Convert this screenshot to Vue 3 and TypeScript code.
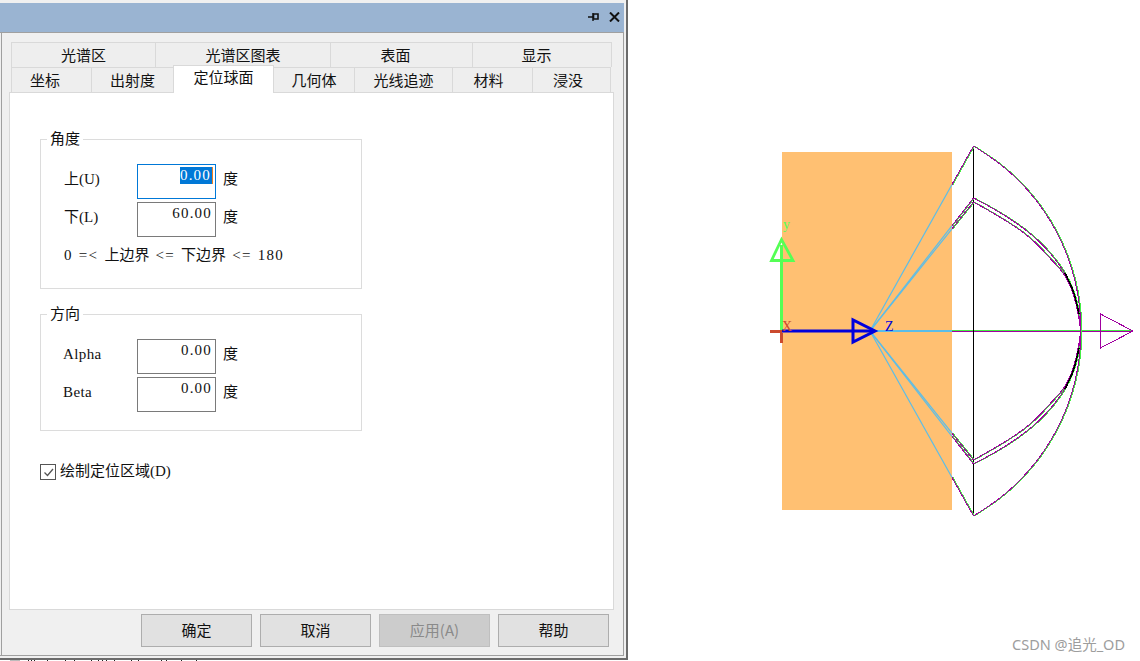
<script setup lang="ts">
type Pt = [number, number];

// shift pulls a label left of the tab's centre, the tabs are not evenly centred in the original
const topTabs = [
  { label: "光谱区", w: 144, shift: 0 },
  { label: "光谱区图表", w: 175, shift: 0 },
  { label: "表面", w: 142, shift: 12 },
  { label: "显示", w: 140, shift: 11 },
];
const bottomTabs = [
  { label: "坐标", w: 80, shift: 13 },
  { label: "出射度", w: 82, shift: 0 },
  { label: "定位球面", w: 101, shift: 0, active: true },
  { label: "几何体", w: 81, shift: 0 },
  { label: "光线追迹", w: 98, shift: 0 },
  { label: "材料", w: 80, shift: 8 },
  { label: "浸没", w: 79, shift: 7 },
];
const buttons = [
  { label: "确定" },
  { label: "取消" },
  { label: "应用(A)", disabled: true },
  { label: "帮助" },
];

const AXIS_Y = 331;
const VERTEX_X = 973.5;

const mirror = (pts: Pt[]): Pt[] => pts.map(([x, y]) => [x, AXIS_Y * 2 - y] as Pt);

// smooth line through points, quadratic through the midpoints
const toPath = (pts: Pt[]) => {
  let d = `M${pts[0][0]} ${pts[0][1]}`;
  for (let i = 1; i < pts.length - 1; i++) {
    const mx = (pts[i][0] + pts[i + 1][0]) / 2;
    const my = (pts[i][1] + pts[i + 1][1]) / 2;
    d += ` Q${pts[i][0]} ${pts[i][1]} ${mx} ${my}`;
  }
  const last = pts[pts.length - 1];
  return d + ` L${last[0]} ${last[1]}`;
};

const outer: Pt[] = [];
for (let y = 146; y <= 331; y += 12) {
  outer.push([868 + Math.sqrt(213 * 213 - (331 - y) * (331 - y)), y]);
}
outer.push([1081, 331]);

const innerA: Pt[] = [[973.5, 198], [1000, 211.7], [1033.3, 235], [1056.7, 260], [1070, 281.7], [1078.3, 306.7], [1080.7, 331]];
const innerB: Pt[] = [[973.5, 202], [1000, 216.7], [1030, 236.7], [1053.3, 261.7], [1066.7, 276.7], [1076.7, 303.3], [1080.7, 331]];
const blackBit: Pt[] = [[1065, 273], [1072, 287], [1076, 300], [1079, 314]];

const curves = [outer, innerA, innerB].flatMap((c) => [toPath(c), toPath(mirror(c))]);
const blackBits = [toPath(blackBit), toPath(mirror(blackBit))];

// rays are blue over the orange block, then green and magenta up to the vertex
const RAY_X = 870;
const RECT_RIGHT = 952;
const rays = [146, 198, 202, 516, 464, 460].map((endY) => {
  const t = (RECT_RIGHT - RAY_X) / (VERTEX_X - RAY_X);
  const midY = AXIS_Y + (endY - AXIS_Y) * t;
  return { midY, endY };
});

const cutoffTicks = [10, 13, 16, 29, 47, 56, 73, 80, 84, 88, 96, 113, 120, 143, 148, 163, 178, 186];
</script>

<template>
  <div class="page">
    <div class="frame">
      <div class="dialog">
        <div class="titlebar">
          <svg class="pin" width="11" height="10" viewBox="0 0 11 10">
            <path d="M0 5H5M5 1V9" stroke="#111" stroke-width="1.4" fill="none" />
            <path d="M5.500 2H10V7H5.500Z" fill="none" stroke="#111" stroke-width="1.6" />
          </svg>
          <svg class="close" width="11" height="10" viewBox="0 0 11 10">
            <path d="M1 0.500L10 9.500M10 0.500L1 9.500" stroke="#111" stroke-width="2" fill="none" />
          </svg>
        </div>
        <div class="body">
          <div class="tabs">
            <div class="tab-row">
              <div
                v-for="t in topTabs"
                :key="t.label"
                class="tab"
                :style="{ width: t.w + 'px', paddingRight: t.shift + 'px' }"
              >{{ t.label }}</div>
            </div>
            <div class="tab-row lower">
              <div
                v-for="t in bottomTabs"
                :key="t.label"
                class="tab"
                :class="{ active: t.active }"
                :style="{ width: t.w + 'px', paddingRight: t.shift + 'px' }"
              >{{ t.label }}</div>
            </div>
          </div>
          <div class="sheet">
            <section class="group angle">
              <span class="legend">角度</span>
              <div class="row">
                <span class="label">上<i>(U)</i></span>
                <div class="field focused"><span class="selected">0.00</span></div>
                <span class="unit">度</span>
              </div>
              <div class="row">
                <span class="label">下<i>(L)</i></span>
                <div class="field">60.00</div>
                <span class="unit">度</span>
              </div>
              <div class="hint"><i>0 =&lt; </i>上边界<i> &lt;= </i>下边界<i> &lt;= 180</i></div>
            </section>
            <section class="group direction">
              <span class="legend">方向</span>
              <div class="row">
                <span class="label"><i>Alpha</i></span>
                <div class="field">0.00</div>
                <span class="unit">度</span>
              </div>
              <div class="row">
                <span class="label"><i>Beta</i></span>
                <div class="field">0.00</div>
                <span class="unit">度</span>
              </div>
            </section>
            <label class="check">
              <span class="box">
                <svg width="13" height="13" viewBox="0 0 13 13">
                  <path d="M2.500 6.500L5.500 9.500L11 3" fill="none" stroke="#555" stroke-width="1.300" />
                </svg>
              </span>
              <span class="check-text">绘制定位区域<i>(D)</i></span>
            </label>
          </div>
          <div class="footer">
            <button v-for="b in buttons" :key="b.label" type="button" class="btn" :disabled="b.disabled">{{ b.label }}</button>
          </div>
        </div>
      </div>
    </div>

    <svg class="canvas" width="512" height="661" viewBox="628 0 512 661">
      <rect x="782" y="152" width="170" height="358" fill="#ffc072" />

      <g fill="none" stroke="#5bbde8">
        <line x1="876" :y1="AXIS_Y" x2="952" :y2="AXIS_Y" stroke-width="2" />
        <line v-for="r in rays" :key="r.endY" :x1="RAY_X" :y1="AXIS_Y" x2="952" :y2="r.midY" stroke-width="1.200" />
      </g>

      <g shape-rendering="crispEdges" fill="none">
        <line x1="952" y1="330" x2="1133" y2="330" stroke="#44ee44" />
        <line x1="952" y1="331.500" x2="1133" y2="331.500" stroke="#a000a0" />
        <line :x1="VERTEX_X" y1="146" :x2="VERTEX_X" y2="516" stroke="#000" />
        <template v-for="r in rays" :key="r.endY">
          <line x1="953" :y1="r.midY" :x2="VERTEX_X + 1" :y2="r.endY" stroke="#44ee44" />
          <line x1="952" :y1="r.midY" :x2="VERTEX_X" :y2="r.endY" stroke="#a000a0" />
        </template>
        <path v-for="(d, i) in curves" :key="'g' + i" :d="d" stroke="#44ee44" transform="translate(1 0)" />
        <path v-for="(d, i) in curves" :key="'m' + i" :d="d" stroke="#a000a0" />
        <path v-for="(d, i) in blackBits" :key="'b' + i" :d="d" stroke="#000" stroke-width="1.500" />
        <path d="M1100.500 314L1133 331L1100.500 348Z" stroke="#a000a0" />
      </g>

      <g fill="none">
        <line x1="781.500" y1="331" x2="781.500" y2="245" stroke="#55ff55" stroke-width="3" />
        <path d="M781.500 239.500L771.500 260.500H793L781.500 239.500Z" stroke="#55ff55" stroke-width="2.800" />
        <line x1="770" y1="331.500" x2="782" y2="331.500" stroke="#cb4a2e" stroke-width="3" />
        <line x1="781.500" y1="333" x2="781.500" y2="343" stroke="#cb4a2e" stroke-width="3" />
        <line x1="782" y1="331" x2="874" y2="331" stroke="#0000dd" stroke-width="3" />
        <path d="M853 320V342L875 331Z" stroke="#0000dd" stroke-width="3" />
      </g>
      <text x="783" y="229" class="axis-label" fill="#55ff55">y</text>
      <text x="782" y="331" class="axis-label" fill="#cb4a2e">X</text>
      <text x="885" y="331" class="axis-label" fill="#0000dd">Z</text>
    </svg>

    <div class="watermark">CSDN @追光_OD</div>
    <svg class="cutoff" width="200" height="1" viewBox="0 0 200 1">
      <rect x="10" width="10" height="1" fill="#bbb" />
      <rect v-for="x in cutoffTicks" :key="x" :x="x + 18" width="1" height="1" fill="#222" />
    </svg>
  </div>
</template>

<style scoped>
.page {
  position: relative;
  display: flex;
  width: 1140px;
  height: 661px;
  overflow: hidden;
  background: #fff;
}

.frame {
  box-sizing: border-box;
  flex: none;
  width: 628px;
  height: 660px;
  padding-top: 3px;
  background: #f0f0f0;
  border-right: 2px solid #6b6b6b;
  border-bottom: 2px solid #6b6b6b;
}

.dialog {
  box-sizing: border-box;
  display: flex;
  flex-direction: column;
  width: 624px;
  height: 653px;
  border-bottom: 1px solid #a0a0a0;
  font-family: "Noto Sans CJK SC", "Noto Sans", sans-serif;
  font-size: 15px;
  color: #111;
}

.titlebar {
  box-sizing: border-box;
  display: flex;
  flex: none;
  justify-content: flex-end;
  align-items: center;
  gap: 10px;
  height: 30px;
  padding: 0 4px 1px 0;
  background: #9ab4d2;
  border-bottom: 1px solid #a0a0a0;
}

.body {
  flex: 1;
  margin-left: 1px;
  padding: 9px 0 0 7px;
  border-left: 1px solid #a0a0a0;
  border-right: 1px solid #a0a0a0;
}

.tabs {
  margin-left: 2px;
}

.tab-row {
  display: flex;
  align-items: flex-end;
  height: 25px;
}

.tab {
  box-sizing: border-box;
  flex: none;
  height: 25px;
  line-height: 24px;
  text-align: center;
  background: #eeeeee;
  border-top: 1px solid #d9d9d9;
  border-left: 1px solid #d9d9d9;
}

.tab:last-child {
  border-right: 1px solid #d9d9d9;
}

.lower .tab {
  line-height: 23px;
}

.lower .tab.active {
  position: relative;
  z-index: 1;
  height: 28px;
  line-height: 21px;
  margin-bottom: -1px;
  background: #fff;
  border-right: 1px solid #d9d9d9;
  margin-right: -1px;
}

.sheet {
  box-sizing: border-box;
  width: 605px;
  height: 518px;
  padding: 46px 0 0 30px;
  background: #fff;
  border: 1px solid #d9d9d9;
}

.group {
  box-sizing: border-box;
  position: relative;
  width: 322px;
  padding: 24px 0 0 23px;
  border: 1px solid #dcdcdc;
}

.angle {
  height: 150px;
}

.direction {
  height: 117px;
  margin-top: 25px;
}

.legend {
  position: absolute;
  top: -11px;
  left: 6px;
  padding: 0 3px;
  line-height: 18px;
  background: #fff;
}

i {
  font-family: "Liberation Serif", serif;
  font-size: 15px;
  font-style: normal;
  white-space: pre;
}

.row {
  display: flex;
  align-items: flex-start;
  height: 35px;
  margin-bottom: 3px;
}

.label,
.unit {
  flex: none;
  margin-top: 5px;
  line-height: 18px;
}

.label {
  width: 73px;
}

.direction .label {
  margin-left: -1px;
  margin-right: 1px;
  letter-spacing: 0.4px;
}

.field {
  box-sizing: border-box;
  flex: none;
  width: 79px;
  height: 35px;
  margin-right: 7px;
  padding: 0 3px 0 0;
  border: 1px solid #7a7a7a;
  font-family: "Liberation Serif", serif;
  font-size: 15px;
  letter-spacing: 1.2px;
  line-height: 20px;
  text-align: right;
}

.field.focused {
  border-color: #0078d7;
  padding-right: 2px;
}

.selected {
  display: inline-block;
  line-height: 17px;
  padding-right: 1px;
  color: #fff;
  background: #0078d7;
  border-right: 1px solid #f08020;
}

.hint {
  margin-top: 7px;
  line-height: 20px;
  white-space: pre;
}

.hint i {
  letter-spacing: 1.3px;
  word-spacing: 1px;
}

.check {
  display: flex;
  align-items: center;
  gap: 4px;
  margin-top: 30px;
  line-height: 17px;
}

.check-text {
  padding-bottom: 3px;
}

.box {
  box-sizing: border-box;
  display: flex;
  width: 16px;
  height: 16px;
  align-items: center;
  justify-content: center;
  border: 1px solid #555;
}

.footer {
  display: flex;
  justify-content: flex-end;
  gap: 8px;
  padding: 4px 14px 0 0;
}

.btn {
  box-sizing: border-box;
  width: 111px;
  height: 33px;
  padding: 0 0 3px;
  background: #e1e1e1;
  border: 1px solid #adadad;
  font: inherit;
  color: #111;
}

.btn:disabled {
  background: #cccccc;
  border-color: #bfbfbf;
  color: #8a8a8a;
}

.canvas {
  flex: none;
}

.axis-label {
  font-family: "Liberation Serif", serif;
  font-size: 14px;
}

.watermark {
  position: absolute;
  top: 635px;
  right: 15px;
  font-family: "Noto Sans", "Noto Sans CJK SC", sans-serif;
  font-size: 14.500px;
  line-height: 18px;
  color: #9d9d9d;
}

.cutoff {
  position: absolute;
  left: 0;
  bottom: 0;
}
</style>
